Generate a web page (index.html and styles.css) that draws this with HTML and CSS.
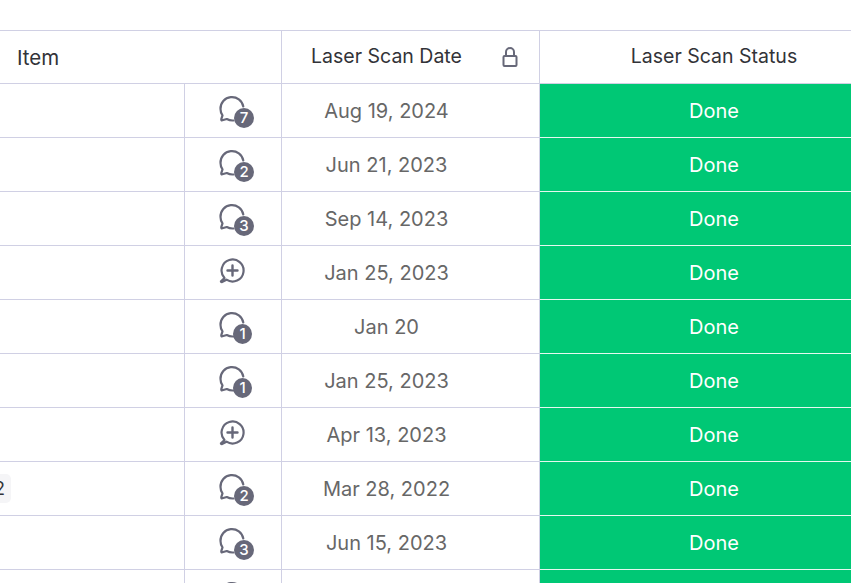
FILE: index.html
```html
<!DOCTYPE html>
<html lang="en">
<head>
<meta charset="utf-8">
<title>Board</title>
<link rel="stylesheet" href="styles.css">
</head>
<body>
<svg class="defs" width="0" height="0" aria-hidden="true">
  <defs>
    <symbol id="bubble" viewBox="1 0 28 28">
      <path d="M25.300 11.500A11.500 11.500 0 0 0 2.500 14c0 2.400.7 4.600 2 6.400l-1.200 3.800c-.2.800.3 1.300 1 1.100l4.500-1.300c1.800 1 3.700 1.500 5.700 1.500h1" fill="none" stroke="currentColor" stroke-width="2.200" stroke-linecap="round" stroke-linejoin="round"/>
    </symbol>
    <symbol id="bubble-plus" viewBox="0 0 28 28">
      <path d="M5.500 21A11 11 0 1 1 7.500 22.700L3 25C2.400 25.300 1.800 24.800 2 24.200Z" fill="none" stroke="currentColor" stroke-width="2.200" stroke-linejoin="round"/>
      <path d="M13.500 8.500v10M8.500 13.500h10" fill="none" stroke="currentColor" stroke-width="2.400" stroke-linecap="round"/>
    </symbol>
  </defs>
</svg>
<main class="board">
  <div class="header">
    <div class="head-item">Item</div>
    <div class="head-date"><span class="head-label">Laser Scan Date</span>
      <svg class="lock" viewBox="0 0 16 20" aria-hidden="true"><rect x="1.500" y="9" width="13" height="10" rx="1" fill="none" stroke="currentColor" stroke-width="2"/><path d="M4 9V5a4 4 0 0 1 8 0v4" fill="none" stroke="currentColor" stroke-width="2"/></svg>
    </div>
    <div class="head-status">Laser Scan Status</div>
  </div>

  <div class="row">
    <div class="item"></div>
    <div class="chat"><span class="bubble"><svg><use href="#bubble"/></svg><b class="count">7</b></span></div>
    <div class="date">Aug 19, 2024</div>
    <div class="status">Done</div>
  </div>
  <div class="row">
    <div class="item"></div>
    <div class="chat"><span class="bubble"><svg><use href="#bubble"/></svg><b class="count">2</b></span></div>
    <div class="date">Jun 21, 2023</div>
    <div class="status">Done</div>
  </div>
  <div class="row">
    <div class="item"></div>
    <div class="chat"><span class="bubble"><svg><use href="#bubble"/></svg><b class="count">3</b></span></div>
    <div class="date">Sep 14, 2023</div>
    <div class="status">Done</div>
  </div>
  <div class="row">
    <div class="item"></div>
    <div class="chat"><span class="bubble"><svg class="plus"><use href="#bubble-plus"/></svg></span></div>
    <div class="date">Jan 25, 2023</div>
    <div class="status">Done</div>
  </div>
  <div class="row">
    <div class="item"></div>
    <div class="chat"><span class="bubble"><svg><use href="#bubble"/></svg><b class="count one">1</b></span></div>
    <div class="date">Jan 20</div>
    <div class="status">Done</div>
  </div>
  <div class="row">
    <div class="item"></div>
    <div class="chat"><span class="bubble"><svg><use href="#bubble"/></svg><b class="count one">1</b></span></div>
    <div class="date">Jan 25, 2023</div>
    <div class="status">Done</div>
  </div>
  <div class="row">
    <div class="item"></div>
    <div class="chat"><span class="bubble"><svg class="plus"><use href="#bubble-plus"/></svg></span></div>
    <div class="date">Apr 13, 2023</div>
    <div class="status">Done</div>
  </div>
  <div class="row">
    <div class="item"><span class="tag">2</span></div>
    <div class="chat"><span class="bubble"><svg><use href="#bubble"/></svg><b class="count">2</b></span></div>
    <div class="date">Mar 28, 2022</div>
    <div class="status">Done</div>
  </div>
  <div class="row">
    <div class="item"></div>
    <div class="chat"><span class="bubble"><svg><use href="#bubble"/></svg><b class="count">3</b></span></div>
    <div class="date">Jun 15, 2023</div>
    <div class="status">Done</div>
  </div>
  <div class="row">
    <div class="item"></div>
    <div class="chat"><span class="bubble"><svg><use href="#bubble"/></svg></span></div>
    <div class="date"></div>
    <div class="status"></div>
  </div>
</main>
</body>
</html>
```

FILE: styles.css
```css
html, body {
  margin: 0;
  height: 100%;
  background: #fff;
  overflow: hidden;
}
.defs { display: block; height: 0; }
.board {
  width: 888px;
  padding-top: 30px;
  font-family: Inter, "Noto Sans", sans-serif;
  font-size: 20px;
  color: #676767;
}
.header, .row {
  display: grid;
  height: 54px;
  box-sizing: border-box;
  border-bottom: 1px solid #d0d0e4;
}
.header {
  grid-template-columns: 282px 258px 348px;
  border-top: 1px solid #d0d0e4;
  color: #323338;
  font-size: 19.500px;
}
.row { grid-template-columns: 185px 97px 258px 348px; }
.head-item {
  display: flex;
  align-items: center;
  padding-left: 17px;
  font-size: 20.500px;
  border-right: 1px solid #d0d0e4;
}
.head-date {
  display: flex;
  align-items: center;
  border-right: 1px solid #d0d0e4;
  padding-right: 21px;
}
.head-label {
  flex: 1;
  text-align: center;
  padding-right: 11px;
  padding-bottom: 2px;
}
.lock { width: 16px; height: 20px; color: #676879; }
.head-status, .status, .date {
  display: flex;
  align-items: center;
  justify-content: center;
}
.head-status { padding-bottom: 2px; }
.item {
  display: flex;
  align-items: center;
  border-right: 1px solid #d0d0e4;
  overflow: hidden;
}
.tag {
  box-sizing: border-box;
  width: 11px;
  height: 29px;
  display: flex;
  align-items: center;
  justify-content: flex-end;
  padding-right: 6px;
  background: #f5f5f7;
  border-radius: 0 5px 5px 0;
  color: #323338;
  font-size: 19px;
  overflow: hidden;
}
.chat {
  display: flex;
  justify-content: center;
  padding-top: 11px;
  box-sizing: border-box;
  border-right: 1px solid #d0d0e4;
}
.date {
  border-right: 1px solid #d0d0e4;
  padding-right: 48px;
}
.status {
  background: #00c875;
  color: #fff;
  height: 54px;
  margin-bottom: -1px;
  border-bottom: 1px solid #e6f8ef;
  box-sizing: border-box;
}
.bubble {
  position: relative;
  display: block;
  width: 28px;
  height: 28px;
  color: #676879;
}
.bubble svg { display: block; width: 28px; height: 28px; }
.count {
  position: absolute;
  left: 15px;
  top: 13px;
  width: 20px;
  height: 20px;
  border-radius: 50%;
  background: #676879;
  color: #fff;
  font-size: 15px;
  font-weight: 500;
  line-height: 20px;
  text-align: center;
}
.count.one { left: 14px; width: 19px; }
```
